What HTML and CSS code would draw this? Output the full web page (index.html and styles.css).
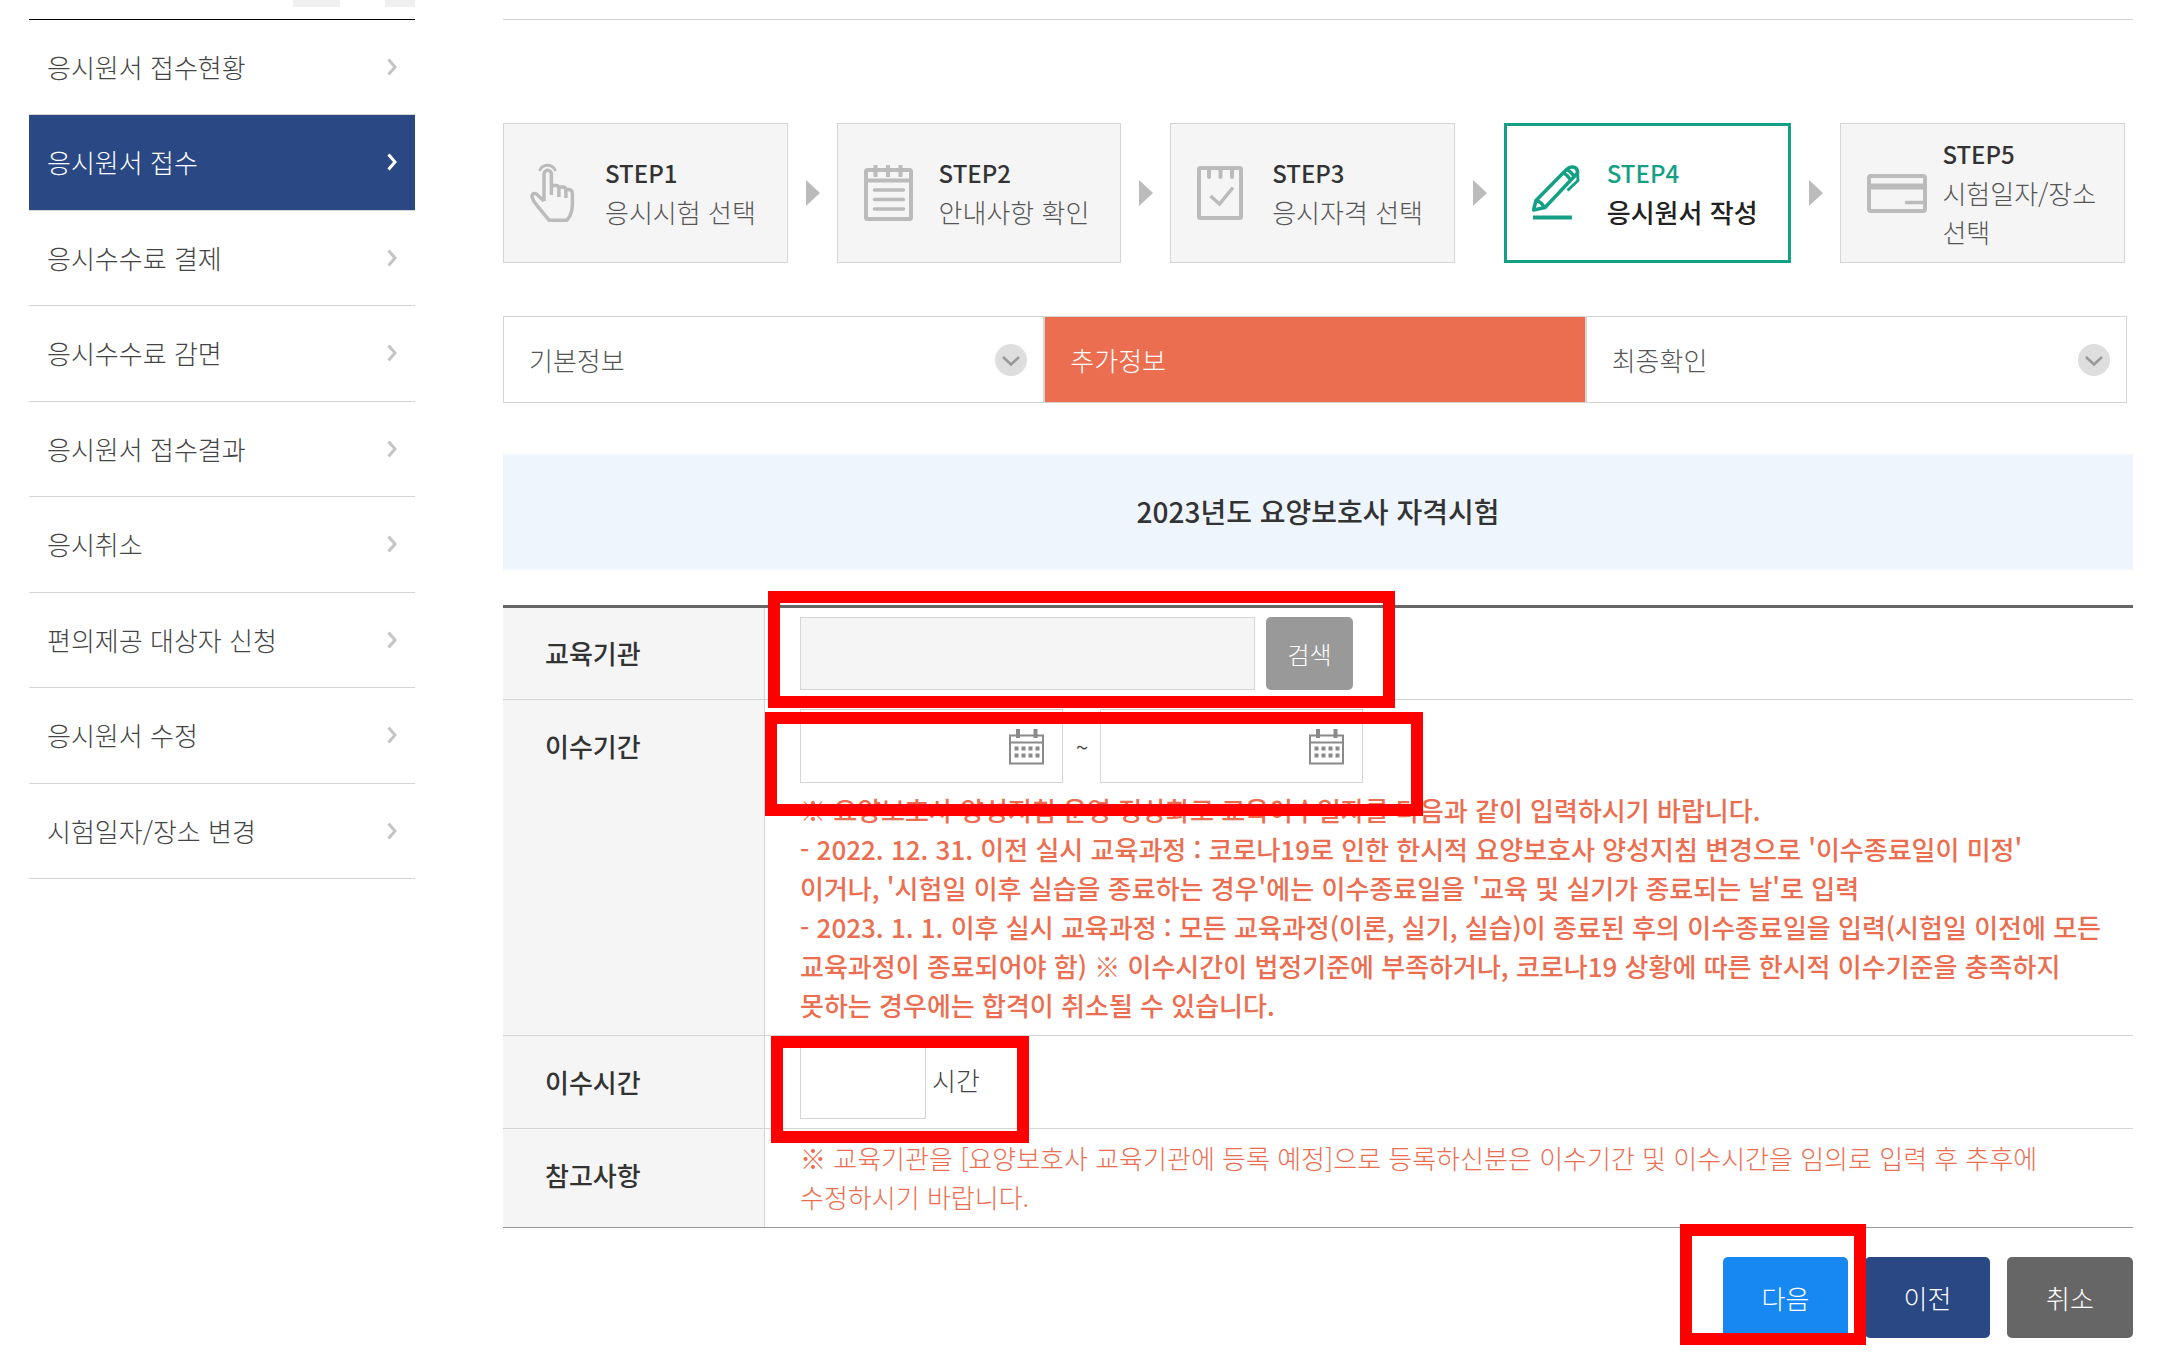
FILE: index.html
```html
<!DOCTYPE html>
<html lang="ko">
<head>
<meta charset="utf-8">
<title>응시원서 접수</title>
<link rel="stylesheet" href="styles.css">
</head>
<body>
<svg class="sprite" aria-hidden="true">
  <symbol id="chevron" viewBox="0 0 10 18"><path d="M1.500 1.500 8 9l-6.500 7.500" fill="none" stroke="currentColor" stroke-width="3"/></symbol>
  <symbol id="arrow" viewBox="0 0 14 26"><path d="M0 0 14 13 0 26Z" fill="currentColor"/></symbol>
  <symbol id="down" viewBox="0 0 32 32"><circle cx="16" cy="16" r="16" fill="#dedede"/><path d="m8 13 8 7.500 8-7.500" fill="none" stroke="#999" stroke-width="2.600"/></symbol>
  <symbol id="calendar" viewBox="0 0 36 36">
    <path d="M1 6.500h33v28H1zM1 13.500h33" fill="none" stroke="#8a8a8a" stroke-width="2"/>
    <path d="M9 0v9M26.500 0v9" stroke="#8a8a8a" stroke-width="4"/>
    <path d="M5.500 19.500h26M5.500 26.500h26" stroke="#8a8a8a" stroke-width="4" stroke-dasharray="4 3"/>
  </symbol>
</svg>
<div class="page">
  <aside class="side">
    <div class="side-top"><span class="stub stub-wide"></span><span class="stub"></span></div>
    <nav>
      <ul class="menu">
        <li><a href="#">응시원서 접수현황<svg><use href="#chevron"/></svg></a></li>
        <li><a href="#" class="current" aria-current="page">응시원서 접수<svg><use href="#chevron"/></svg></a></li>
        <li><a href="#">응시수수료 결제<svg><use href="#chevron"/></svg></a></li>
        <li><a href="#">응시수수료 감면<svg><use href="#chevron"/></svg></a></li>
        <li><a href="#">응시원서 접수결과<svg><use href="#chevron"/></svg></a></li>
        <li><a href="#">응시취소<svg><use href="#chevron"/></svg></a></li>
        <li><a href="#">편의제공 대상자 신청<svg><use href="#chevron"/></svg></a></li>
        <li><a href="#">응시원서 수정<svg><use href="#chevron"/></svg></a></li>
        <li><a href="#">시험일자/장소 변경<svg><use href="#chevron"/></svg></a></li>
      </ul>
    </nav>
  </aside>

  <main class="content">
    <ol class="steps">
      <li class="step">
        <svg class="step-icon" viewBox="0 0 60 60" fill="none" stroke="currentColor" stroke-width="3.500" stroke-linejoin="round">
          <path d="M9.500 8a8.500 8.500 0 0 1 16 0" stroke-width="3"/>
          <path d="M14 38V11a3.700 3.700 0 0 1 7.400 0v21M21.400 22.500h4.500q3 0 3 3V34M28.900 24h3.500q3.500 0 3.500 3.500V35M35.900 26.500h2.500q4 0 4 4.500v11q0 6-2.500 11l-3 4.200H19L5 40Q2 35.500 2 33q.5-3 3-2.500 2 .2 4 3l5 4.500"/>
        </svg>
        <div><strong>STEP1</strong><span>응시시험 선택</span></div>
      </li>
      <li class="arrow" aria-hidden="true"><svg><use href="#arrow"/></svg></li>
      <li class="step">
        <svg class="step-icon" viewBox="0 0 60 60" fill="none" stroke="currentColor" stroke-width="4">
          <rect x="2" y="7" width="45" height="49" rx="1.500"/>
          <path d="M2 17.500h45M11.500 2v12M24 2v12M36.500 2v12"/>
          <path d="M10.500 27h29M10.500 36.500h29M10.500 46h29" stroke-width="3.500" stroke-linecap="round"/>
        </svg>
        <div><strong>STEP2</strong><span>안내사항 확인</span></div>
      </li>
      <li class="arrow" aria-hidden="true"><svg><use href="#arrow"/></svg></li>
      <li class="step">
        <svg class="step-icon" viewBox="0 0 60 60" fill="none" stroke="currentColor" stroke-width="4">
          <rect x="2" y="5" width="42" height="50" rx="1.500"/>
          <path d="M12 5v9M23.500 5v9M35 5v9" stroke-linecap="round"/>
          <path d="m13.500 33 9 8L36 24.500" stroke-width="3.500"/>
        </svg>
        <div><strong>STEP3</strong><span>응시자격 선택</span></div>
      </li>
      <li class="arrow" aria-hidden="true"><svg><use href="#arrow"/></svg></li>
      <li class="step active" aria-current="step">
        <svg class="step-icon" viewBox="0 0 60 60" fill="none" stroke="currentColor" stroke-width="3.500" stroke-linejoin="round">
          <path d="M1 54.500h39" stroke-width="4"/>
          <path d="M1.500 47 4 37.500 34.500 6.500q3-3 6.500-2.500 5 1 4.500 6L13 44.500 1.500 47ZM4 37.500q6 1.500 8 7M31 10q5 2 8 8M34.500 6.500q5 2 8 8"/>
          <path d="m45.500 10 .5 7.500L35.500 27.500" stroke-width="3"/>
        </svg>
        <div><strong>STEP4</strong><span>응시원서 작성</span></div>
      </li>
      <li class="arrow" aria-hidden="true"><svg><use href="#arrow"/></svg></li>
      <li class="step">
        <svg class="step-icon" viewBox="0 0 60 60" fill="none" stroke="currentColor" stroke-width="4">
          <rect x="2" y="13" width="56" height="35" rx="2"/>
          <path d="M2 23.500h56" stroke-width="6"/>
          <path d="M39.500 39.500H58" stroke-width="3.500" stroke-linecap="round"/>
        </svg>
        <div><strong>STEP5</strong><span>시험일자/장소 선택</span></div>
      </li>
    </ol>

    <div class="tabs">
      <button type="button" class="tab">기본정보<svg><use href="#down"/></svg></button>
      <button type="button" class="tab selected">추가정보</button>
      <button type="button" class="tab">최종확인<svg><use href="#down"/></svg></button>
    </div>

    <h1 class="exam">2023년도 요양보호사 자격시험</h1>

    <form>
      <table class="form-table">
        <tr>
          <th scope="row"><label for="school">교육기관</label></th>
          <td>
            <div class="fields">
              <input id="school" class="school" type="text" readonly>
              <button type="button" class="search">검색</button>
            </div>
            <span class="mark mark-school"></span>
          </td>
        </tr>
        <tr>
          <th scope="row"><label for="from">이수기간</label></th>
          <td>
            <div class="fields period">
              <span class="date"><input id="from" type="text"><svg><use href="#calendar"/></svg></span>
              <span class="tilde">~</span>
              <span class="date"><input id="to" type="text" aria-label="이수기간 종료일"><svg><use href="#calendar"/></svg></span>
            </div>
            <p class="note strong">※ 요양보호사 양성지침 운영 정상화로 교육이수일자를 다음과 같이 입력하시기 바랍니다.<br>- 2022. 12. 31. 이전 실시 교육과정 : 코로나19로 인한 한시적 요양보호사 양성지침 변경으로 '이수종료일이 미정'<br>이거나, '시험일 이후 실습을 종료하는 경우'에는 이수종료일을 '교육 및 실기가 종료되는 날'로 입력<br>- 2023. 1. 1. 이후 실시 교육과정 : 모든 교육과정(이론, 실기, 실습)이 종료된 후의 이수종료일을 입력(시험일 이전에 모든<br>교육과정이 종료되어야 함) ※ 이수시간이 법정기준에 부족하거나, 코로나19 상황에 따른 한시적 이수기준을 충족하지<br>못하는 경우에는 합격이 취소될 수 있습니다.</p>
            <span class="mark mark-period"></span>
          </td>
        </tr>
        <tr>
          <th scope="row"><label for="hours">이수시간</label></th>
          <td>
            <div class="fields hours"><input id="hours" type="text"><span>시간</span></div>
            <span class="mark mark-hours"></span>
          </td>
        </tr>
        <tr>
          <th scope="row">참고사항</th>
          <td><p class="note">※ 교육기관을 [요양보호사 교육기관에 등록 예정]으로 등록하신분은 이수기간 및 이수시간을 임의로 입력 후 추후에<br>수정하시기 바랍니다.</p></td>
        </tr>
      </table>
      <div class="actions">
        <div class="next-wrap"><button type="button" class="btn next">다음</button><span class="mark mark-next"></span></div>
        <button type="button" class="btn prev">이전</button>
        <button type="button" class="btn cancel">취소</button>
      </div>
    </form>
  </main>
</div>
</body>
</html>
```
FILE: styles.css
```css
* { box-sizing: border-box; }

body {
  margin: 0;
  background: #fff;
  color: #444;
  font: 300 26px/39px "Noto Sans CJK KR", "Noto Sans", sans-serif;
}

ul, ol { margin: 0; padding: 0; list-style: none; }
a { color: inherit; text-decoration: none; }
button, input { font: inherit; margin: 0; padding: 0; }
svg { display: block; }
.sprite { position: absolute; width: 0; height: 0; }

.page {
  display: flex;
  align-items: flex-start;
  gap: 88px;
  padding: 0 28px 0 29px;
}

/* side menu */
.side { flex: 0 0 386px; }
.side-top { display: flex; justify-content: flex-end; gap: 45px; height: 19px; }
.stub { width: 30px; height: 7px; background: #f0f0f0; }
.stub-wide { width: 47px; }
.menu { border-top: 1px solid #000; }
.menu a {
  display: flex;
  justify-content: space-between;
  align-items: center;
  padding: 27px 18px 28px;
  border-bottom: 1px solid #d5d5d5;
}
.menu li:nth-child(even) a { padding-bottom: 29px; }
.menu svg { width: 10px; height: 18px; color: #c4c4c4; }
.menu .current { background: #294884; color: #fff; }
.menu .current svg { color: #fff; }

/* steps */
.content {
  flex: 1;
  min-width: 0;
  margin-top: 19px;
  padding-top: 103px;
  border-top: 1px solid #d5d5d5;
}
.steps { display: flex; align-items: center; padding-right: 8px; }
.step {
  flex: 1 1 0;
  display: flex;
  align-items: center;
  gap: 15px;
  min-height: 140px;
  padding-left: 26px;
  border: 1px solid #d5d5d5;
  background: #f5f5f5;
  color: #555;
}
.step div { padding-bottom: 2px; }
.step-icon { flex: none; width: 60px; height: 60px; color: #bbb; }
.step strong, .step span { display: block; }
.step strong { color: #333; font-size: 24px; font-weight: 500; }
.step.active { padding-left: 25px; border: 3px solid #14a085; background: #fff; color: #222; font-weight: 500; }
.step.active strong, .step.active .step-icon { color: #14a085; }
.arrow { flex: none; margin: 0 17px 0 18px; color: #bbb; }
.arrow svg { width: 14px; height: 26px; }

/* tabs */
.tabs { display: flex; margin-top: 53px; padding-right: 6px; }
.tab {
  flex: 1 1 0;
  display: flex;
  justify-content: space-between;
  align-items: center;
  height: 87px;
  padding: 0 16px 0 25px;
  border: 1px solid #d5d5d5;
  background: #fff;
  color: #555;
}
.tab svg { width: 32px; height: 32px; }
.tab.selected { background: #eb6e50; color: #fff; }

.exam {
  margin: 51px 0 35px;
  padding: 37px 0 39px;
  background: #eef5fd;
  color: #333;
  font-size: 28px;
  font-weight: 500;
  line-height: 40px;
  text-align: center;
}

/* form */
.form-table {
  width: 100%;
  border-spacing: 0;
  border-top: 3px solid #666;
  border-bottom: 1px solid #999;
}
.form-table th, .form-table td { vertical-align: top; text-align: left; border-bottom: 1px solid #d5d5d5; }
.form-table tr:last-child > * { border-bottom: 0; }
.form-table th {
  width: 262px;
  padding: 26px 0 0 42px;
  border-right: 1px solid #d5d5d5;
  background: #f5f5f5;
  color: #333;
  font-weight: 500;
}
.form-table tr:first-child th { padding-top: 25px; }
.form-table td { position: relative; padding: 9px 0 9px 35px; }
.fields { display: flex; align-items: center; gap: 11px; }
.fields input { height: 73px; border: 1px solid #d5d5d5; background: #fff; }
.fields .school { width: 455px; background: #f5f5f5; }
.search { width: 87px; height: 73px; border: 0; border-radius: 5px; background: #999; color: #fff; font-size: 24px; }
.fields.period { gap: 13px; }
.date { position: relative; }
.date input { display: block; width: 263px; height: 74px; }
.date svg { position: absolute; top: 20px; right: 18px; width: 36px; height: 36px; }
.tilde { width: 11px; font-size: 22px; font-weight: 400; text-align: center; }
.period + .note { margin-top: 7px; margin-bottom: 2px; }
.fields.hours { gap: 6px; }
.hours input { width: 126px; height: 74px; }
.hours span { padding-bottom: 6px; }
.note { margin: 0; color: #eb6e50; }
.strong { font-weight: 500; }
.form-table tr:last-child td { padding-bottom: 11px; }

.actions { display: flex; justify-content: flex-end; gap: 17px; margin-top: 29px; padding-bottom: 16px; }
.next-wrap { position: relative; }
.btn { display: block; width: 125px; height: 81px; border: 0; border-radius: 5px; color: #fff; }
.next { background: #1787f2; }
.prev { background: #294884; }
.cancel { width: 126px; background: #666; }

/* red guide frames over the fields to fill in */
.mark { position: absolute; z-index: 1; border: 12px solid #f00; pointer-events: none; }
.mark-school { left: 3px; top: -17px; width: 627px; height: 117px; }
.mark-period { left: 0; top: 12px; width: 658px; height: 104px; }
.mark-hours { left: 6px; top: 0; width: 258px; height: 107px; }
.mark-next { left: -43px; top: -33px; width: 186px; height: 121px; }
```
